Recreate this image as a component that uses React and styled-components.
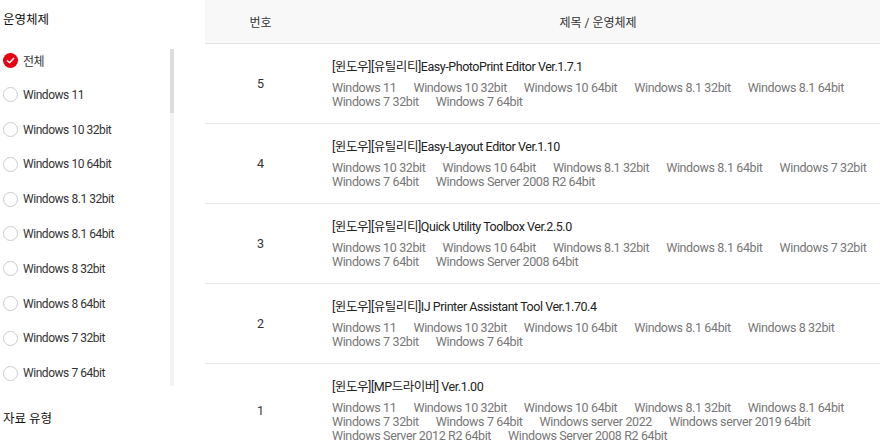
import React, { useState } from "react";
import styled, { createGlobalStyle } from "styled-components";

const GlobalStyle = createGlobalStyle`
  html, body {
    margin: 0;
    padding: 0;
    background: #fff;
  }
  body {
    font-family: Roboto, "Noto Sans CJK KR", sans-serif;
    color: #333;
    overflow: hidden;
  }
  * {
    box-sizing: border-box;
  }
`;

const Page = styled.div`
  display: flex;
  align-items: flex-start;
  width: 880px;
  height: 447px;
  overflow: hidden;
`;

const Sidebar = styled.aside`
  width: 174px;
  flex-shrink: 0;
  padding-left: 3px;
`;

const FilterTitle = styled.h3`
  margin: 0;
  font-size: 12.5px;
  font-weight: 400;
  line-height: 16px;
  color: #111;
  padding-top: ${(p) => p.$top || 12}px;
`;

const ListBox = styled.div`
  position: relative;
  margin-top: 21px;
  height: 337px;
`;

const OptionList = styled.ul`
  list-style: none;
  margin: 0;
  padding: 0;
  height: 100%;
  overflow: hidden;
  display: flex;
  flex-direction: column;
  gap: 12.8px;
`;

/* thin scrollbar drawn over the right edge of the list */
const ScrollTrack = styled.div`
  position: absolute;
  top: 0;
  right: 0;
  width: 4px;
  height: 100%;
  background: #f3f3f3;
`;

const ScrollThumb = styled.div`
  width: 100%;
  height: ${(p) => p.$size}px;
  background: #dcdcdc;
`;

const Option = styled.li`
  display: flex;
  align-items: center;
  gap: 5px;
  height: 22px;
  flex-shrink: 0;
  font-size: 12px;
  letter-spacing: -0.45px;
  color: #333;
  cursor: pointer;
`;

const Radio = styled.span`
  width: 15px;
  height: 15px;
  border-radius: 50%;
  flex-shrink: 0;
  display: flex;
  align-items: center;
  justify-content: center;
  border: ${(p) => (p.$checked ? "none" : "1px solid #cccccc")};
  background: ${(p) => (p.$checked ? "#e60012" : "#fff")};
`;

const Main = styled.main`
  flex: 1;
  margin-left: 31px;
`;

const Table = styled.table`
  width: 100%;
  border-collapse: collapse;
  table-layout: fixed;
`;

const HeadCell = styled.th`
  height: 43px;
  background: #f8f8f8;
  border-bottom: 1px solid #e4e4e4;
  font-size: 12px;
  font-weight: 400;
  color: #333;
  text-align: center;
  width: ${(p) => p.$width || "auto"};
`;

const Row = styled.tr`
  border-bottom: 1px solid #e8e8e8;
`;

const NumCell = styled.td`
  text-align: center;
  font-size: 12.5px;
  color: #333;
  vertical-align: middle;
`;

const TitleCell = styled.td`
  padding: 15px 8px 14px 16px;
  vertical-align: top;
`;

const ItemTitle = styled.div`
  font-size: 12.5px;
  line-height: 16px;
  color: #222;
  letter-spacing: -0.45px;
  margin-bottom: 6px;
`;

const OsList = styled.div`
  display: flex;
  flex-wrap: wrap;
  column-gap: 17px;
`;

const OsTag = styled.span`
  font-size: 12.5px;
  line-height: 14px;
  color: #777;
  letter-spacing: -0.38px;
  white-space: nowrap;
`;

const CheckMark = () => (
  <svg width="9" height="9" viewBox="0 0 10 10" fill="none">
    <path d="M1.5 5.2 L4 7.5 L8.6 2.6" stroke="#fff" strokeWidth="1.6" strokeLinecap="round" strokeLinejoin="round" />
  </svg>
);

const osOptions = [
  "전체",
  "Windows 11",
  "Windows 10 32bit",
  "Windows 10 64bit",
  "Windows 8.1 32bit",
  "Windows 8.1 64bit",
  "Windows 8 32bit",
  "Windows 8 64bit",
  "Windows 7 32bit",
  "Windows 7 64bit",
  "Windows Vista 32bit",
  "Windows Vista 64bit",
  "Windows XP 32bit",
  "Windows XP 64bit",
  "Windows server 2022",
  "Windows server 2019 64bit",
  "Windows Server 2016 64bit",
  "Windows Server 2012 R2 64bit",
  "Windows Server 2012 64bit",
  "Windows Server 2008 R2 64bit",
  "Windows Server 2008 64bit",
  "macOS 14",
  "macOS 13",
  "macOS 12",
  "macOS 11",
  "macOS 10.15",
];

const THUMB = 64;

const downloads = [
  {
    no: 5,
    title: "[윈도우][유틸리티]Easy-PhotoPrint Editor Ver.1.7.1",
    os: ["Windows 11", "Windows 10 32bit", "Windows 10 64bit", "Windows 8.1 32bit", "Windows 8.1 64bit", "Windows 7 32bit", "Windows 7 64bit"],
  },
  {
    no: 4,
    title: "[윈도우][유틸리티]Easy-Layout Editor Ver.1.10",
    os: ["Windows 10 32bit", "Windows 10 64bit", "Windows 8.1 32bit", "Windows 8.1 64bit", "Windows 7 32bit", "Windows 7 64bit", "Windows Server 2008 R2 64bit"],
  },
  {
    no: 3,
    title: "[윈도우][유틸리티]Quick Utility Toolbox Ver.2.5.0",
    os: ["Windows 10 32bit", "Windows 10 64bit", "Windows 8.1 32bit", "Windows 8.1 64bit", "Windows 7 32bit", "Windows 7 64bit", "Windows Server 2008 64bit"],
  },
  {
    no: 2,
    title: "[윈도우][유틸리티]IJ Printer Assistant Tool Ver.1.70.4",
    os: ["Windows 11", "Windows 10 32bit", "Windows 10 64bit", "Windows 8.1 64bit", "Windows 8 32bit", "Windows 7 32bit", "Windows 7 64bit"],
  },
  {
    no: 1,
    title: "[윈도우][MP드라이버] Ver.1.00",
    os: [
      "Windows 11",
      "Windows 10 32bit",
      "Windows 10 64bit",
      "Windows 8.1 32bit",
      "Windows 8.1 64bit",
      "Windows 7 32bit",
      "Windows 7 64bit",
      "Windows server 2022",
      "Windows server 2019 64bit",
      "Windows Server 2012 R2 64bit",
      "Windows Server 2008 R2 64bit",
    ],
  },
];

export default function App() {
  const [selected, setSelected] = useState("전체");

  return (
    <>
      <GlobalStyle />
      <Page>
        <Sidebar>
          <FilterTitle>운영체제</FilterTitle>
          <ListBox>
            <OptionList>
              {osOptions.map((os) => (
                <Option key={os} onClick={() => setSelected(os)}>
                  <Radio $checked={selected === os}>{selected === os && <CheckMark />}</Radio>
                  {os}
                </Option>
              ))}
            </OptionList>
            <ScrollTrack>
              <ScrollThumb $size={THUMB} />
            </ScrollTrack>
          </ListBox>
          <FilterTitle $top={25}>자료 유형</FilterTitle>
        </Sidebar>
        <Main>
          <Table>
            <thead>
              <tr>
                <HeadCell $width="111px">번호</HeadCell>
                <HeadCell>제목 / 운영체제</HeadCell>
              </tr>
            </thead>
            <tbody>
              {downloads.map((d) => (
                <Row key={d.no}>
                  <NumCell>{d.no}</NumCell>
                  <TitleCell>
                    <ItemTitle>{d.title}</ItemTitle>
                    <OsList>
                      {d.os.map((o) => (
                        <OsTag key={o}>{o}</OsTag>
                      ))}
                    </OsList>
                  </TitleCell>
                </Row>
              ))}
            </tbody>
          </Table>
        </Main>
      </Page>
    </>
  );
}
